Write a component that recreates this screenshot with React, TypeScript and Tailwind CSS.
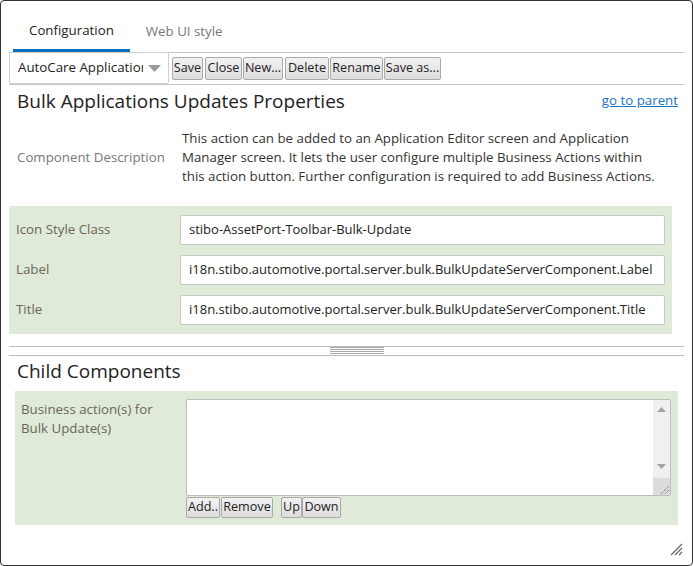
import React from "react";

const font = { fontFamily: '"Open Sans", "Noto Sans", sans-serif' };

function Btn({ children, w }: { children: React.ReactNode; w: string }) {
  return (
    <button
      className={`${w} h-[23px] px-0 border border-[#a9a9a9] rounded-[2px] bg-gradient-to-b from-[#f2f2f2] to-[#dddddd] text-[12.6px] leading-none text-[#222] whitespace-nowrap overflow-hidden flex items-center justify-center`}
    >
      {children}
    </button>
  );
}

function SmallBtn({ children, w }: { children: React.ReactNode; w: string }) {
  return (
    <button
      className={`${w} h-[21px] px-0 border border-[#a9a9a9] rounded-[2px] bg-gradient-to-b from-[#f2f2f2] to-[#dddddd] text-[12.6px] leading-none text-[#222] whitespace-nowrap overflow-hidden flex items-center justify-center`}
    >
      {children}
    </button>
  );
}

function Field({ label, value }: { label: string; value: string }) {
  return (
    <div className="flex items-center h-[30px]">
      <div className="w-[164px] shrink-0 text-[13.3px] text-[#6b6558]">{label}</div>
      <div className="flex-1 h-[30px] border border-[#c8c8c8] rounded-[2px] bg-white flex items-center pl-[8px] text-[13px] text-[#222] whitespace-nowrap overflow-hidden">
        {value}
      </div>
    </div>
  );
}

export default function App() {
  return (
    <div style={font} className="w-[693px] h-[566px] bg-white">
      <div className="relative w-[693px] h-[566px] border border-[#333] rounded-[4px] bg-white flex flex-col overflow-hidden">
        {/* Tabs */}
        <div className="mx-[8px] mt-[10px] flex border-b border-[#c6c6c6] pl-[4px]">
          <div className="px-[16px] h-[41px] flex items-center border-b-[3px] border-[#0a6ebd] text-[13.3px] text-[#222] pt-[2px]">
            Configuration
          </div>
          <div className="px-[16px] h-[41px] flex items-center text-[13.3px] text-[#777] pt-[1px]">Web UI style</div>
        </div>
        {/* Toolbar */}
        <div className="mx-[8px] flex items-center h-[33px] border-b border-[#c6c6c6] -mt-[1px]">
          <div className="w-[160px] h-[32px] border border-[#d0d0d0] rounded-[2px] bg-white flex items-center pl-[8px] pr-[7px] mr-[3px]">
            <span className="w-[125px] text-[13.3px] text-[#222] whitespace-nowrap overflow-hidden">AutoCare Application</span>
            <div className="flex-1" />
            <svg width="13" height="7" viewBox="0 0 13 7">
              <path d="M0 0 L13 0 L6.5 7 Z" fill="#9a9a9a" />
            </svg>
          </div>
          <div className="flex">
            <Btn w="w-[31px]">Save</Btn>
            <div className="w-[2px]" />
            <Btn w="w-[37px]">Close</Btn>
            <div className="w-[1px]" />
            <Btn w="w-[40px]">New...</Btn>
            <div className="w-[2px]" />
            <Btn w="w-[44px]">Delete</Btn>
            <div className="w-[1px]" />
            <Btn w="w-[53px]">Rename</Btn>
            <div className="w-[1px]" />
            <Btn w="w-[57px]">Save as...</Btn>
          </div>
        </div>
        {/* Heading */}
        <div className="mx-[8px] flex justify-between items-start pl-[8px] pr-[6px] pt-[3px]">
          <div className="text-[19px] text-[#222] leading-[26px]">Bulk Applications Updates Properties</div>
          <a className="text-[13.3px] text-[#1a73c8] underline leading-[18px] mt-[3px]">go to parent</a>
        </div>
        {/* Description */}
        <div className="mx-[8px] flex items-center pl-[8px] mt-[15px]">
          <div className="w-[165px] shrink-0 text-[13.3px] text-[#777]">Component Description</div>
          <div className="w-[478px] text-[13.3px] leading-[19px] text-[#333]">
            This action can be added to an Application Editor screen and Application Manager screen. It lets the user
            configure multiple Business Actions within<br />this action button. Further configuration is required to add
            Business Actions.
          </div>
        </div>
        {/* Green panel */}
        <div className="ml-[8px] w-[663px] mt-[20px] bg-[#dfead8] pl-[7px] pr-[7px] py-[9px] flex flex-col gap-[10px]">
          <Field label="Icon Style Class" value="stibo-AssetPort-Toolbar-Bulk-Update" />
          <Field label="Label" value="i18n.stibo.automotive.portal.server.bulk.BulkUpdateServerComponent.Label" />
          <Field label="Title" value="i18n.stibo.automotive.portal.server.bulk.BulkUpdateServerComponent.Title" />
        </div>
        {/* Splitter */}
        <div className="mx-[8px] mt-[12px] h-[10px] border-t border-b border-[#bdbdbd] flex justify-center items-start">
          <div className="w-[54px] flex flex-col gap-[1px] ml-[20px]">
            <div className="h-[1px] bg-[#a8a8a8]" />
            <div className="h-[1px] bg-[#a8a8a8]" />
            <div className="h-[1px] bg-[#a8a8a8]" />
            <div className="h-[1px] bg-[#a8a8a8]" />
          </div>
        </div>
        {/* Child components */}
        <div className="mx-[8px] pl-[8px] mt-[2px] text-[19px] leading-[26px] text-[#222]">Child Components</div>
        <div className="ml-[14px] w-[663px] mt-[7px] bg-[#dfead8] pl-[6px] pr-[7px] pt-[8px] pb-[7px] flex">
          <div className="w-[165px] shrink-0 text-[13.3px] leading-[19px] text-[#6b6558] pt-[1px]">
            Business action(s) for
            <br />
            Bulk Update(s)
          </div>
          <div className="flex-1 flex flex-col">
            <div className="h-[97px] border border-[#bdbdbd] rounded-[2px] bg-white flex justify-end">
              <div className="w-[17px] bg-[#f0f0f0] flex flex-col items-center">
                <svg width="9" height="5" viewBox="0 0 9 5" className="mt-[7px]">
                  <path d="M0 5 L9 5 L4.5 0 Z" fill="#a3a3a3" />
                </svg>
                <div className="flex-1" />
                <svg width="9" height="5" viewBox="0 0 9 5" className="mb-[9px]">
                  <path d="M0 0 L9 0 L4.5 5 Z" fill="#a3a3a3" />
                </svg>
                <div className="w-[17px] h-[17px] bg-[#dcdcdc] flex items-end justify-end">
                  <svg width="12" height="12" viewBox="0 0 12 12">
                    <path d="M11 3 L3 11 M11 7 L7 11" stroke="#555" strokeWidth="1" strokeDasharray="1 1" />
                  </svg>
                </div>
              </div>
            </div>
            <div className="flex mt-[1px]">
              <SmallBtn w="w-[34px]">Add..</SmallBtn>
              <div className="w-[1px]" />
              <SmallBtn w="w-[52px]">Remove</SmallBtn>
              <div className="w-[8px]" />
              <SmallBtn w="w-[21px]">Up</SmallBtn>
              <SmallBtn w="w-[39px]">Down</SmallBtn>
            </div>
          </div>
        </div>
        {/* Resize grip */}
        <svg width="14" height="14" viewBox="0 0 14 14" className="absolute right-[9px] bottom-[9px]">
          <path d="M13 2 L2 13 M13 6 L6 13 M13 10 L10 13" stroke="#666" strokeWidth="1.2" />
        </svg>
      </div>
    </div>
  );
}
